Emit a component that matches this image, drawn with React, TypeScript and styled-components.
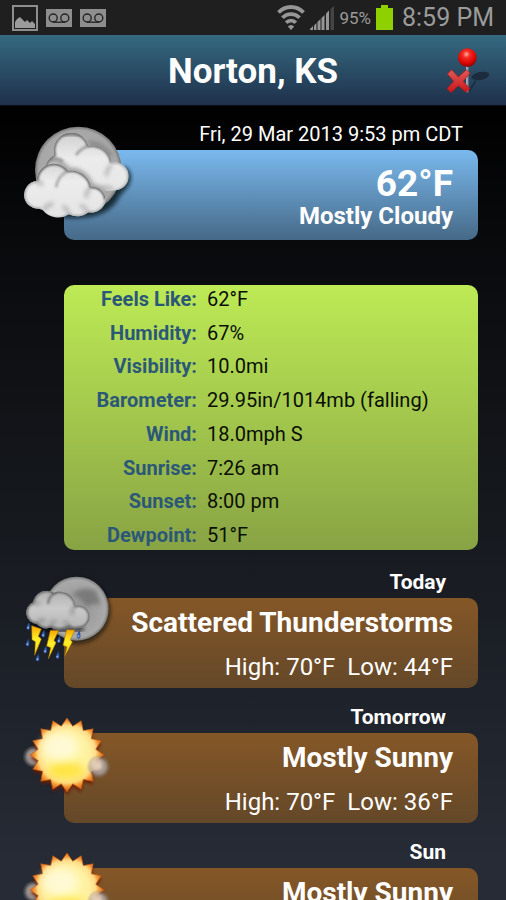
import React from "react";
import styled, { createGlobalStyle } from "styled-components";

const GlobalStyle = createGlobalStyle`
  *, *::before, *::after { box-sizing: border-box; }
  body { margin: 0; background: #000; }
`;

const Screen = styled.div`
  display: flex;
  flex-direction: column;
  height: 100vh;
  overflow: hidden;
  font-family: Roboto, "Noto Sans", sans-serif;
  color: #fff;
`;

const StatusBar = styled.div`
  display: flex;
  align-items: center;
  justify-content: space-between;
  flex: none;
  height: 35px;
  padding: 0 12px;
  background: #1f1f1f;
  color: #9b9b9b;
`;

const StatusGroup = styled.div<{ $gap: number }>`
  display: flex;
  align-items: center;
  gap: ${(p) => p.$gap}px;
`;

const BatteryText = styled.span`
  font-size: 17px;
  line-height: 20px;
`;

const Clock = styled.span`
  margin-left: 4px;
  font-size: 25px;
  line-height: 32px;
`;

const Header = styled.header`
  display: grid;
  grid-template-columns: 1fr auto 1fr;
  align-items: center;
  flex: none;
  height: 71px;
  padding: 0 14px;
  background: linear-gradient(#356a80, #1f304b);
  border-bottom: 1px solid #0c1018;
`;

const Title = styled.h1`
  grid-column: 2;
  margin: 0;
  padding-top: 4px;
  font-size: 35px;
  line-height: 42px;
  font-weight: 700;
`;

const PinButton = styled.button`
  justify-self: end;
  display: flex;
  padding: 0;
  border: 0;
  background: none;
  cursor: pointer;
`;

const Content = styled.main`
  flex: 1;
  min-height: 0;
  overflow-y: auto;
  scrollbar-width: none;
  background: linear-gradient(#000 0%, #08090b 15%, #15181d 50%, #262b35 95%);
`;

const Block = styled.section`
  position: relative;
  padding: 0 28px 0 64px;
`;

const BlockIcon = styled.div`
  position: absolute;
  top: 17px;
  left: 22px;
  svg { display: block; }
`;

const DateLine = styled.div`
  padding: 12px 15px 0 0;
  height: 44px;
  font-size: 20px;
  line-height: 32px;
  text-align: right;
`;

const DayName = styled.h2`
  margin: 0;
  padding: 13px 32px 0 0;
  height: 45px;
  font-size: 21px;
  line-height: 32px;
  font-weight: 700;
  text-align: right;
`;

const Card = styled.div<{ $tone: "blue" | "brown" }>`
  display: flex;
  flex-direction: column;
  align-items: flex-end;
  min-height: 90px;
  padding: ${(p) => (p.$tone === "blue" ? "14px 25px 0" : "8px 25px 0")};
  border-radius: 10px;
  background: ${(p) =>
    p.$tone === "blue"
      ? "linear-gradient(#7ab9ee, #466987)"
      : "linear-gradient(#855727, #644829)"};
`;

const Temperature = styled.div`
  font-size: 37px;
  line-height: 40px;
  font-weight: 700;
`;

const Condition = styled.div`
  font-size: 24px;
  line-height: 24px;
  font-weight: 700;
`;

const Forecast = styled.div`
  font-size: 28px;
  line-height: 34px;
  font-weight: 700;
`;

const Range = styled.div`
  display: flex;
  gap: 12px;
  margin-top: 12px;
  font-size: 24px;
  line-height: 30px;
`;

const Details = styled.dl`
  display: grid;
  grid-template-columns: 133px 1fr;
  column-gap: 10px;
  align-content: space-between;
  margin: 45px 28px 3px 64px;
  height: 265px;
  border-radius: 10px;
  background: linear-gradient(#bdea55, #88a344);
  font-size: 20px;
  line-height: 29px;
`;

const DetailLabel = styled.dt`
  color: #2c5878;
  font-weight: 700;
  text-align: right;
`;

const DetailValue = styled.dd`
  margin: 0;
  color: #0a0f05;
`;

const PictureIcon = () => (
  <svg width="26" height="26" viewBox="0 0 26 26" aria-hidden="true">
    <rect x="1" y="1" width="24" height="24" fill="none" stroke="#8e8e8e" strokeWidth="2" />
    <path d="M3 17 L5 14 L8 12 L13 17 L15 15 L18 18 L20 16 L23 19 V23 H3Z" fill="#9b9b9b" />
  </svg>
);

const VoicemailIcon = () => (
  <svg width="26" height="26" viewBox="0 0 26 26" aria-hidden="true">
    <rect y="4" width="26" height="18" fill="#8e8e8e" />
    <g fill="none" stroke="#252525" strokeWidth="1.4">
      <circle cx="7.2" cy="13" r="4" />
      <circle cx="18.8" cy="13" r="4" />
      <path d="M7 17.2H19" />
    </g>
  </svg>
);

const WifiIcon = () => (
  <svg width="28" height="26" viewBox="0 0 28 26" aria-hidden="true">
    <g fill="none" stroke="#969696" strokeWidth="3.8">
      <path d="M1.5 7.500 A17 17 0 0 1 26.500 7.500" />
      <path d="M5.500 12.800 A11.500 11.500 0 0 1 22.500 12.800" />
      <path d="M9.200 17.800 A6.500 6.500 0 0 1 18.800 17.800" />
    </g>
    <path d="M10.800 21.500 Q14 18.500 17.200 21.500 L14 25Z" fill="#969696" />
  </svg>
);

const SignalIcon = () => (
  <svg width="24" height="24" viewBox="0 0 24 24" aria-hidden="true">
    <g fill="#969696">
      <path d="M0 24V23L3 20V24Z" />
      <path d="M4 24V19.500L6.500 17V24Z" />
      <path d="M7.500 24V16L10.500 13V24Z" />
      <path d="M11.500 24V12L14.500 9V24Z" />
      <path d="M16 24V7.500L19 4.500V24Z" />
    </g>
    <path d="M20.500 24V3L24 0V24Z" fill="#444" />
  </svg>
);

const BatteryIcon = () => (
  <svg width="17" height="25" viewBox="0 0 17 25" aria-hidden="true">
    <path d="M5 0H12V3H17V25H0V3H5Z" fill="#8fd000" />
  </svg>
);

const PinIcon = () => (
  <svg width="47" height="49" viewBox="580 135 141 147" aria-hidden="true">
    <defs>
      <radialGradient id="pinBall" cx="0.45" cy="0.32" r="0.65">
        <stop offset="0" stopColor="#ffb0a0" />
        <stop offset="0.3" stopColor="#f52a22" />
        <stop offset="0.75" stopColor="#d90505" />
        <stop offset="1" stopColor="#900" />
      </radialGradient>
      <linearGradient id="pinCross" x1="0" y1="0" x2="0" y2="1">
        <stop offset="0" stopColor="#e05a58" />
        <stop offset="1" stopColor="#c91518" />
      </linearGradient>
    </defs>
    <path d="M650 274 L672 240" stroke="#1c2c3d" strokeWidth="5" />
    <ellipse cx="686" cy="225" rx="27" ry="12" transform="rotate(-12 686 225)" fill="#1c2c3d" />
    <path d="M647 195V274" stroke="#8799a8" strokeWidth="7" />
    <path d="M645 195V270" stroke="#c8d2da" strokeWidth="2" />
    <circle cx="647" cy="170" r="28" fill="url(#pinBall)" />
    <path
      d="M587 219 L600 206 L620 228 L644 206 L655 217 L635 241 L655 263 L643 274 L620 254 L598 275 L586 263 L606 241Z"
      fill="url(#pinCross)" stroke="#a81518" strokeWidth="2"
    />
  </svg>
);

const BACK_CLOUD = "M125 225 Q130 150 163 135 A52 52 0 0 1 265 107 A60 60 0 0 1 335 158 A42 42 0 1 1 346 241 Q320 244 300 238 Q210 270 125 225Z";
const FRONT_CLOUD = "M118 296 A41 41 0 0 1 110 213 A52 52 0 0 1 204 182 A61 61 0 0 1 273 230 A41 41 0 0 1 317 270 A43 43 0 0 1 266 307 A54 54 0 0 1 207 313 A60 60 0 0 1 128 300Z";

const MoonCloudsIcon = () => (
  <svg width="112" height="104" viewBox="66 39 336 312" role="img" aria-label="Mostly cloudy night">
    <defs>
      <radialGradient id="mcMoon" cx="0.5" cy="0.5" r="0.5">
        <stop offset="0" stopColor="#b8b8b8" />
        <stop offset="0.92" stopColor="#a6a6a6" />
        <stop offset="1" stopColor="#747474" />
      </radialGradient>
      <linearGradient id="mcCloud" x1="0" y1="0" x2="0" y2="1">
        <stop offset="0" stopColor="#d4d4d4" />
        <stop offset="0.35" stopColor="#ececec" />
        <stop offset="1" stopColor="#e4e4e4" />
      </linearGradient>
      <filter id="mcSoft" x="-20%" y="-20%" width="140%" height="140%"><feGaussianBlur stdDeviation="7" /></filter>
      <filter id="mcEdge" x="-20%" y="-20%" width="140%" height="140%"><feGaussianBlur stdDeviation="2.5" /></filter>
      <clipPath id="mcBack"><path d={BACK_CLOUD} /></clipPath>
      <clipPath id="mcFront"><path d={FRONT_CLOUD} /></clipPath>
    </defs>
    <path d="M120 302 Q210 338 290 316 Q340 300 362 254 L384 230 Q404 190 375 170Z" fill="#05080c" opacity="0.75" filter="url(#mcSoft)" />
    <circle cx="235" cy="180" r="130" fill="url(#mcMoon)" />
    <path d="M260 91 Q310 92 338 135 Q320 155 285 130Z" fill="#767676" opacity="0.6" filter="url(#mcSoft)" />
    <g clipPath="url(#mcBack)">
      <rect x="100" y="80" width="300" height="190" fill="url(#mcCloud)" />
      <path d="M150 150 Q175 140 188 155 M228 135 Q240 118 262 108" fill="none" stroke="#8e8e8e" strokeWidth="9" filter="url(#mcEdge)" opacity="0.75" />
      <path d="M335 165 Q318 178 320 198 M305 236 Q318 226 340 240" fill="none" stroke="#b0b0b0" strokeWidth="10" filter="url(#mcSoft)" />
      <path d="M125 225 Q130 150 163 135 A52 52 0 0 1 265 107 A60 60 0 0 1 335 158" fill="none" stroke="#6c6c6c" strokeWidth="10" filter="url(#mcEdge)" />
      <path d="M335 158 A42 42 0 1 1 346 241" fill="none" stroke="#b0b0b0" strokeWidth="8" filter="url(#mcEdge)" />
      <path d="M106 213 A52 52 0 0 1 204 182 A61 61 0 0 1 273 230 A41 41 0 0 1 317 270" fill="none" stroke="#777" strokeWidth="14" filter="url(#mcSoft)" opacity="0.7" />
    </g>
    <g clipPath="url(#mcFront)">
      <rect x="70" y="155" width="260" height="170" fill="url(#mcCloud)" />
      <path d="M168 232 Q172 202 200 184" fill="none" stroke="#999" strokeWidth="9" filter="url(#mcEdge)" opacity="0.7" />
      <path d="M105 216 Q118 212 128 226 M272 234 Q255 245 260 264 M207 313 Q202 296 188 288 M130 302 Q145 278 160 284 M264 307 Q255 290 240 286" fill="none" stroke="#b0b0b0" strokeWidth="10" filter="url(#mcSoft)" />
      <path d="M110 213 A52 52 0 0 1 204 182 A61 61 0 0 1 273 230 A41 41 0 0 1 317 270" fill="none" stroke="#656565" strokeWidth="10" filter="url(#mcEdge)" />
      <path d="M317 270 A43 43 0 0 1 266 307 A54 54 0 0 1 207 313 A60 60 0 0 1 118 296 A41 41 0 0 1 110 213" fill="none" stroke="#a8a8a8" strokeWidth="8" filter="url(#mcEdge)" />
    </g>
  </svg>
);

const STORM_CLOUD = "M110 192 A34 34 0 0 1 99 127 A42 42 0 0 1 162 98 A48 48 0 0 1 227 137 A34 34 0 1 1 235 204 Q220 208 208 200 Q178 216 153 202 Q132 212 110 192Z";
const STORM_DROPS = [[84, 200], [129, 223], [82, 250], [135, 271], [112, 295], [176, 240], [172, 287], [235, 226]];
const STORM_BOLTS = [[112, 198], [157, 211], [206, 209]];

const StormIcon = () => (
  <svg width="112" height="104" viewBox="66 30 336 312" role="img" aria-label="Scattered thunderstorms night">
    <defs>
      <radialGradient id="stMoon">
        <stop offset="0" stopColor="#929292" />
        <stop offset="0.9" stopColor="#a9a9a9" />
        <stop offset="1" stopColor="#777" />
      </radialGradient>
      <linearGradient id="stCloud" x1="0" y1="0" x2="0" y2="1">
        <stop offset="0" stopColor="#a8a8a8" />
        <stop offset="0.5" stopColor="#cacaca" />
        <stop offset="1" stopColor="#b2b2b2" />
      </linearGradient>
      <linearGradient id="stBolt" x1="0" y1="0" x2="0" y2="1">
        <stop offset="0" stopColor="#f5a800" />
        <stop offset="0.45" stopColor="#ffef2a" />
        <stop offset="1" stopColor="#ffd900" />
      </linearGradient>
      <filter id="stSoft" x="-20%" y="-20%" width="140%" height="140%"><feGaussianBlur stdDeviation="6" /></filter>
      <filter id="stEdge" x="-20%" y="-20%" width="140%" height="140%"><feGaussianBlur stdDeviation="2.5" /></filter>
      <clipPath id="stClip"><path d={STORM_CLOUD} /></clipPath>
    </defs>
    <circle cx="232" cy="153" r="98" fill="#080a0d" opacity="0.7" filter="url(#stSoft)" />
    <circle cx="230" cy="146" r="96" fill="url(#stMoon)" />
    <path d="M216 105 Q240 78 285 90 Q300 110 300 138 Q280 125 260 140 Q245 112 216 105Z" fill="#626262" opacity="0.6" filter="url(#stSoft)" />
    <path d="M90 185 Q150 222 250 205" fill="none" stroke="#050607" strokeWidth="14" opacity="0.7" filter="url(#stSoft)" />
    <g clipPath="url(#stClip)">
      <rect x="70" y="75" width="210" height="140" fill="url(#stCloud)" />
      <path d="M144 132 Q145 110 165 98" fill="none" stroke="#666" strokeWidth="7" filter="url(#stEdge)" opacity="0.8" />
      <path d="M98 129 Q110 126 118 134 M226 140 Q212 148 217 165 M110 192 Q120 178 135 182 M153 202 Q150 188 168 182 M208 200 Q203 188 190 186" fill="none" stroke="#888" strokeWidth="8" filter="url(#stSoft)" />
      <path d={STORM_CLOUD} fill="none" stroke="#555" strokeWidth="9" filter="url(#stEdge)" opacity="0.85" />
    </g>
    {STORM_DROPS.map(([x, y]) => (
      <g key={`${x}-${y}`}>
        <path d={`M${x + 3} ${y - 12} Q${x + 9} ${y + 9} ${x} ${y + 9} Q${x - 9} ${y + 7} ${x + 3} ${y - 12}Z`} fill="#3e68b9" stroke="#203c7c" strokeWidth="2" />
        <circle cx={x} cy={y + 3} r="3" fill="#86aee9" />
      </g>
    ))}
    {STORM_BOLTS.map(([x, y], i) => (
      <path
        key={x}
        d={i === 0
          ? "M95 197 L124 207 L115 229 L124 237 L104 286 L106 245 L96 239Z"
          : `M${x - 6} ${y} L${x + 19} ${y + 1} L${x + 5} ${y + 30} L${x + 11} ${y + 37} L${x - 12} ${y + 92 - i * 6} L${x - 5} ${y + 52} L${x - 17} ${y + 47}Z`}
        fill="url(#stBolt)" stroke="#a66b00" strokeWidth="1.500"
      />
    ))}
  </svg>
);

const SUN_POINTS = Array.from({ length: 32 }, (_, i) => {
  const radius = i % 2 === 0 ? 111 : 88;
  const angle = (i * Math.PI) / 16;
  return `${201 + radius * Math.sin(angle)},${165 - radius * Math.cos(angle)}`;
}).join(" ");

const SunIcon = () => {
  const id = React.useId();
  return (
    <svg width="112" height="104" viewBox="66 15 336 312" role="img" aria-label="Mostly sunny">
      <defs>
        <radialGradient id={`${id}f`} gradientUnits="userSpaceOnUse" cx="201" cy="162" r="112">
          <stop offset="0" stopColor="#fff9a8" />
          <stop offset="0.6" stopColor="#fff0a0" />
          <stop offset="0.77" stopColor="#ffdc88" />
          <stop offset="0.86" stopColor="#f5a040" />
          <stop offset="1" stopColor="#d05a10" />
        </radialGradient>
        <radialGradient id={`${id}c`}>
          <stop offset="0" stopColor="#c9bfb8" />
          <stop offset="0.6" stopColor="#a89f9a" stopOpacity="0.8" />
          <stop offset="1" stopColor="#777" stopOpacity="0" />
        </radialGradient>
        <filter id={`${id}b`} x="-60%" y="-60%" width="220%" height="220%"><feGaussianBlur stdDeviation="13" /></filter>
        <filter id={`${id}s`} x="-30%" y="-30%" width="160%" height="160%"><feGaussianBlur stdDeviation="4" /></filter>
      </defs>
      <circle cx="101" cy="170" r="34" fill={`url(#${id}c)`} />
      <polygon points={SUN_POINTS} transform="translate(0 9)" fill="#6b1604" opacity="0.8" filter={`url(#${id}s)`} />
      <polygon points={SUN_POINTS} fill={`url(#${id}f)`} stroke="#c65a10" strokeWidth="2" />
      <ellipse cx="198" cy="212" rx="56" ry="26" fill="#ffe020" opacity="0.75" filter={`url(#${id}b)`} />
      <ellipse cx="180" cy="140" rx="55" ry="40" fill="#fffbe0" opacity="0.8" filter={`url(#${id}b)`} />
      <circle cx="296" cy="200" r="36" fill={`url(#${id}c)`} />
      <circle cx="288" cy="192" r="18" fill="#f8dcc0" opacity="0.6" filter={`url(#${id}s)`} />
    </svg>
  );
};

const DETAILS = [
  ["Feels Like:", "62°F"],
  ["Humidity:", "67%"],
  ["Visibility:", "10.0mi"],
  ["Barometer:", "29.95in/1014mb (falling)"],
  ["Wind:", "18.0mph S"],
  ["Sunrise:", "7:26 am"],
  ["Sunset:", "8:00 pm"],
  ["Dewpoint:", "51°F"],
];

const DAYS = [
  { day: "Today", text: "Scattered Thunderstorms", high: "70°F", low: "44°F", Icon: StormIcon },
  { day: "Tomorrow", text: "Mostly Sunny", high: "70°F", low: "36°F", Icon: SunIcon },
  { day: "Sun", text: "Mostly Sunny", high: "", low: "", Icon: SunIcon },
];

export default function App() {
  return (
    <Screen>
      <GlobalStyle />
      <StatusBar>
        <StatusGroup $gap={8}>
          <PictureIcon />
          <VoicemailIcon />
          <VoicemailIcon />
        </StatusGroup>
        <StatusGroup $gap={5}>
          <WifiIcon />
          <SignalIcon />
          <BatteryText>95%</BatteryText>
          <BatteryIcon />
          <Clock>8:59 PM</Clock>
        </StatusGroup>
      </StatusBar>
      <Header>
        <Title>Norton, KS</Title>
        <PinButton type="button" aria-label="Remove location">
          <PinIcon />
        </PinButton>
      </Header>
      <Content>
        <Block>
          <DateLine>Fri, 29 Mar 2013 9:53 pm CDT</DateLine>
          <Card $tone="blue">
            <Temperature>62°F</Temperature>
            <Condition>Mostly Cloudy</Condition>
          </Card>
          <BlockIcon><MoonCloudsIcon /></BlockIcon>
        </Block>
        <Details>
          {DETAILS.map(([label, value]) => (
            <React.Fragment key={label}>
              <DetailLabel>{label}</DetailLabel>
              <DetailValue>{value}</DetailValue>
            </React.Fragment>
          ))}
        </Details>
        {DAYS.map(({ day, text, high, low, Icon }) => (
          <Block key={day}>
            <DayName>{day}</DayName>
            <Card $tone="brown">
              <Forecast>{text}</Forecast>
              {high && (
                <Range>
                  <span>High: {high}</span>
                  <span>Low: {low}</span>
                </Range>
              )}
            </Card>
            <BlockIcon><Icon /></BlockIcon>
          </Block>
        ))}
      </Content>
    </Screen>
  );
}
